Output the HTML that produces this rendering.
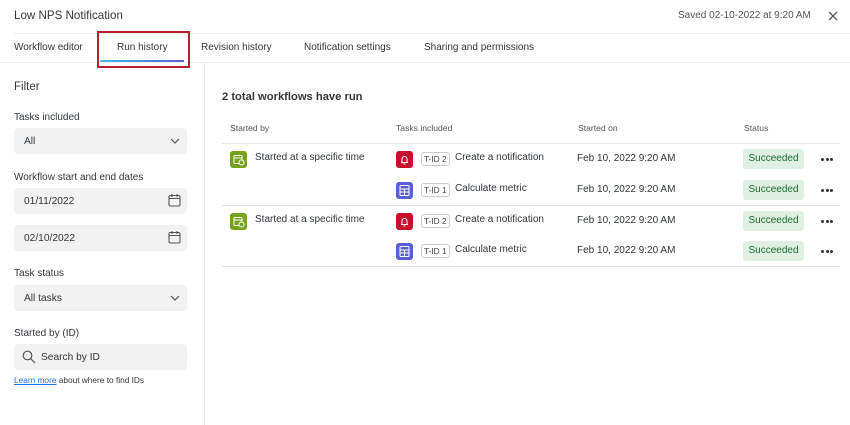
<!DOCTYPE html><html><head><style>
*{box-sizing:border-box;margin:0;padding:0}
body{width:850px;height:425px;background:#fff;font-family:"Liberation Sans",sans-serif;color:#32363a;position:relative;overflow:hidden;font-size:10px}
.a{position:absolute}
.inp{position:absolute;left:14px;width:173px;background:#f2f2f2;border-radius:4px;height:26px;font-size:10.2px;padding:8px 10px;color:#32363a}
.th{position:absolute;top:123px;font-size:8.6px;color:#525252}
.hl{position:absolute;left:222px;width:618px;height:1px;background:#e6e6e6}
.badge{position:absolute;left:743px;width:61px;height:20px;background:#dff0e3;color:#1b6b2e;border-radius:3px;font-size:10px;text-align:center;line-height:20px}
.dots{position:absolute;left:821px;width:14px;height:4px}
.dots i{position:absolute;top:0;width:3px;height:3px;border-radius:50%;background:#333}
.tid{position:absolute;left:421px;border:1px solid #ccc;border-radius:3px;font-size:8.3px;padding:1px 2px;color:#444;line-height:10px}
.ic{position:absolute;width:17px;height:17px;border-radius:3px}
.ic svg{position:absolute;left:0;top:0}
.t{position:absolute;font-size:10px}
.tab{position:absolute;top:42px;font-size:10px}
.lab{position:absolute;left:14px;font-size:10px}
.cal{position:absolute;right:6px;top:6px}
.chev{position:absolute;right:7px;top:10px}
</style></head><body>
<div class="a" style="left:14px;top:9px;font-size:11.6px">Low NPS Notification</div>
<div class="a" style="left:678px;top:10px;font-size:10px;color:#555">Saved 02-10-2022 at 9:20 AM</div>
<svg class="a" style="left:828px;top:11px" width="10" height="10" viewBox="0 0 10 10"><path d="M1 1L9 9M9 1L1 9" stroke="#555" stroke-width="1.3"/></svg>
<div class="a" style="left:14px;top:33px;width:836px;height:1px;background:#eee"></div>
<div class="tab" style="left:14px">Workflow editor</div>
<div class="tab" style="left:117px">Run history</div>
<div class="tab" style="left:201px">Revision history</div>
<div class="tab" style="left:304px">Notification settings</div>
<div class="tab" style="left:424px">Sharing and permissions</div>
<div class="a" style="left:100px;top:60px;width:84px;height:2px;background:linear-gradient(90deg,#3fc1e8,#5b5fd6)"></div>
<div class="a" style="left:0;top:62px;width:850px;height:1px;background:#eee"></div>
<div class="a" style="left:97px;top:31px;width:93px;height:37px;border:2px solid #b8202e"></div>
<div class="a" style="left:204px;top:63px;width:1px;height:362px;background:#eee"></div>
<div class="a" style="left:14px;top:81px;font-size:11.5px">Filter</div>
<div class="lab" style="top:112px">Tasks included</div>
<div class="inp" style="top:128px">All<svg class="chev" width="10" height="6" viewBox="0 0 10 6"><path d="M1 1L5 5L9 1" fill="none" stroke="#555" stroke-width="1.2"/></svg></div>
<div class="lab" style="top:172px">Workflow start and end dates</div>
<div class="inp" style="top:188px">01/11/2022<svg class="cal" width="13" height="13" viewBox="0 0 13 13"><rect x="1" y="1.5" width="11" height="10.5" rx="1.5" fill="none" stroke="#555" stroke-width="1.1"/><path d="M1 4.5H12M4 0V3M9 0V3" stroke="#555" stroke-width="1.1"/></svg></div>
<div class="inp" style="top:225px">02/10/2022<svg class="cal" width="13" height="13" viewBox="0 0 13 13"><rect x="1" y="1.5" width="11" height="10.5" rx="1.5" fill="none" stroke="#555" stroke-width="1.1"/><path d="M1 4.5H12M4 0V3M9 0V3" stroke="#555" stroke-width="1.1"/></svg></div>
<div class="lab" style="top:268px">Task status</div>
<div class="inp" style="top:285px">All tasks<svg class="chev" width="10" height="6" viewBox="0 0 10 6"><path d="M1 1L5 5L9 1" fill="none" stroke="#555" stroke-width="1.2"/></svg></div>
<div class="lab" style="top:328px">Started by (ID)</div>
<div class="inp" style="top:344px;padding-left:27px">Search by ID
<svg class="a" style="left:8px;top:6px" width="14" height="14" viewBox="0 0 14 14"><circle cx="5.5" cy="5.5" r="4.3" fill="none" stroke="#555" stroke-width="1.2"/><path d="M8.7 8.7L13 13" stroke="#555" stroke-width="1.2"/></svg></div>
<div class="a" style="left:14px;top:375px;font-size:8.3px"><span style="color:#1a73e8;text-decoration:underline">Learn more</span> about where to find IDs</div>
<div class="a" style="left:222px;top:91px;font-size:11.2px;font-weight:bold">2 total workflows have run</div>
<div class="th" style="left:230px">Started by</div>
<div class="th" style="left:396px">Tasks included</div>
<div class="th" style="left:578px">Started on</div>
<div class="th" style="left:744px">Status</div>
<div class="hl" style="top:143px"></div>
<div class="hl" style="top:205px"></div>
<div class="hl" style="top:266px"></div>

<div class="ic" style="left:230px;top:151px;background:#76a11c"><svg width="17" height="17" viewBox="0 0 17 17"><rect x="4" y="4.5" width="8" height="8" rx="1" fill="none" stroke="#fff" stroke-width="1"/><path d="M4 7H12" stroke="#fff"/><circle cx="11.5" cy="11.5" r="2.5" fill="#76a11c" stroke="#fff"/></svg></div>
<div class="t" style="left:255px;top:152px">Started at a specific time</div>
<div class="ic" style="left:396px;top:151px;background:#c8102e"><svg width="17" height="17" viewBox="0 0 17 17"><path d="M5 11.5H12M6 11V8a2.5 2.5 0 015 0v3M7.5 13h2" fill="none" stroke="#fff" stroke-width="1"/></svg></div>
<div class="tid" style="top:152px">T-ID 2</div>
<div class="t" style="left:455px;top:152px">Create a notification</div>
<div class="t" style="left:577px;top:153px">Feb 10, 2022 9:20 AM</div>
<div class="badge" style="top:149px">Succeeded</div><div class="dots" style="top:158px"><i style="left:0"></i><i style="left:4.5px"></i><i style="left:9px"></i></div>

<div class="ic" style="left:396px;top:182px;background:#5a5fd8"><svg width="17" height="17" viewBox="0 0 17 17"><rect x="4" y="3.5" width="9" height="10" rx="1" fill="none" stroke="#fff"/><path d="M4 7H13M4 10H13M8.5 7V13.5" stroke="#fff"/></svg></div>
<div class="tid" style="top:183px">T-ID 1</div>
<div class="t" style="left:455px;top:183px">Calculate metric</div>
<div class="t" style="left:577px;top:184px">Feb 10, 2022 9:20 AM</div>
<div class="badge" style="top:180px">Succeeded</div><div class="dots" style="top:189px"><i style="left:0"></i><i style="left:4.5px"></i><i style="left:9px"></i></div>

<div class="ic" style="left:230px;top:213px;background:#76a11c"><svg width="17" height="17" viewBox="0 0 17 17"><rect x="4" y="4.5" width="8" height="8" rx="1" fill="none" stroke="#fff" stroke-width="1"/><path d="M4 7H12" stroke="#fff"/><circle cx="11.5" cy="11.5" r="2.5" fill="#76a11c" stroke="#fff"/></svg></div>
<div class="t" style="left:255px;top:214px">Started at a specific time</div>
<div class="ic" style="left:396px;top:213px;background:#c8102e"><svg width="17" height="17" viewBox="0 0 17 17"><path d="M5 11.5H12M6 11V8a2.5 2.5 0 015 0v3M7.5 13h2" fill="none" stroke="#fff" stroke-width="1"/></svg></div>
<div class="tid" style="top:214px">T-ID 2</div>
<div class="t" style="left:455px;top:214px">Create a notification</div>
<div class="t" style="left:577px;top:215px">Feb 10, 2022 9:20 AM</div>
<div class="badge" style="top:211px">Succeeded</div><div class="dots" style="top:220px"><i style="left:0"></i><i style="left:4.5px"></i><i style="left:9px"></i></div>

<div class="ic" style="left:396px;top:243px;background:#5a5fd8"><svg width="17" height="17" viewBox="0 0 17 17"><rect x="4" y="3.5" width="9" height="10" rx="1" fill="none" stroke="#fff"/><path d="M4 7H13M4 10H13M8.5 7V13.5" stroke="#fff"/></svg></div>
<div class="tid" style="top:244px">T-ID 1</div>
<div class="t" style="left:455px;top:244px">Calculate metric</div>
<div class="t" style="left:577px;top:245px">Feb 10, 2022 9:20 AM</div>
<div class="badge" style="top:241px">Succeeded</div><div class="dots" style="top:250px"><i style="left:0"></i><i style="left:4.5px"></i><i style="left:9px"></i></div>
</body></html>
